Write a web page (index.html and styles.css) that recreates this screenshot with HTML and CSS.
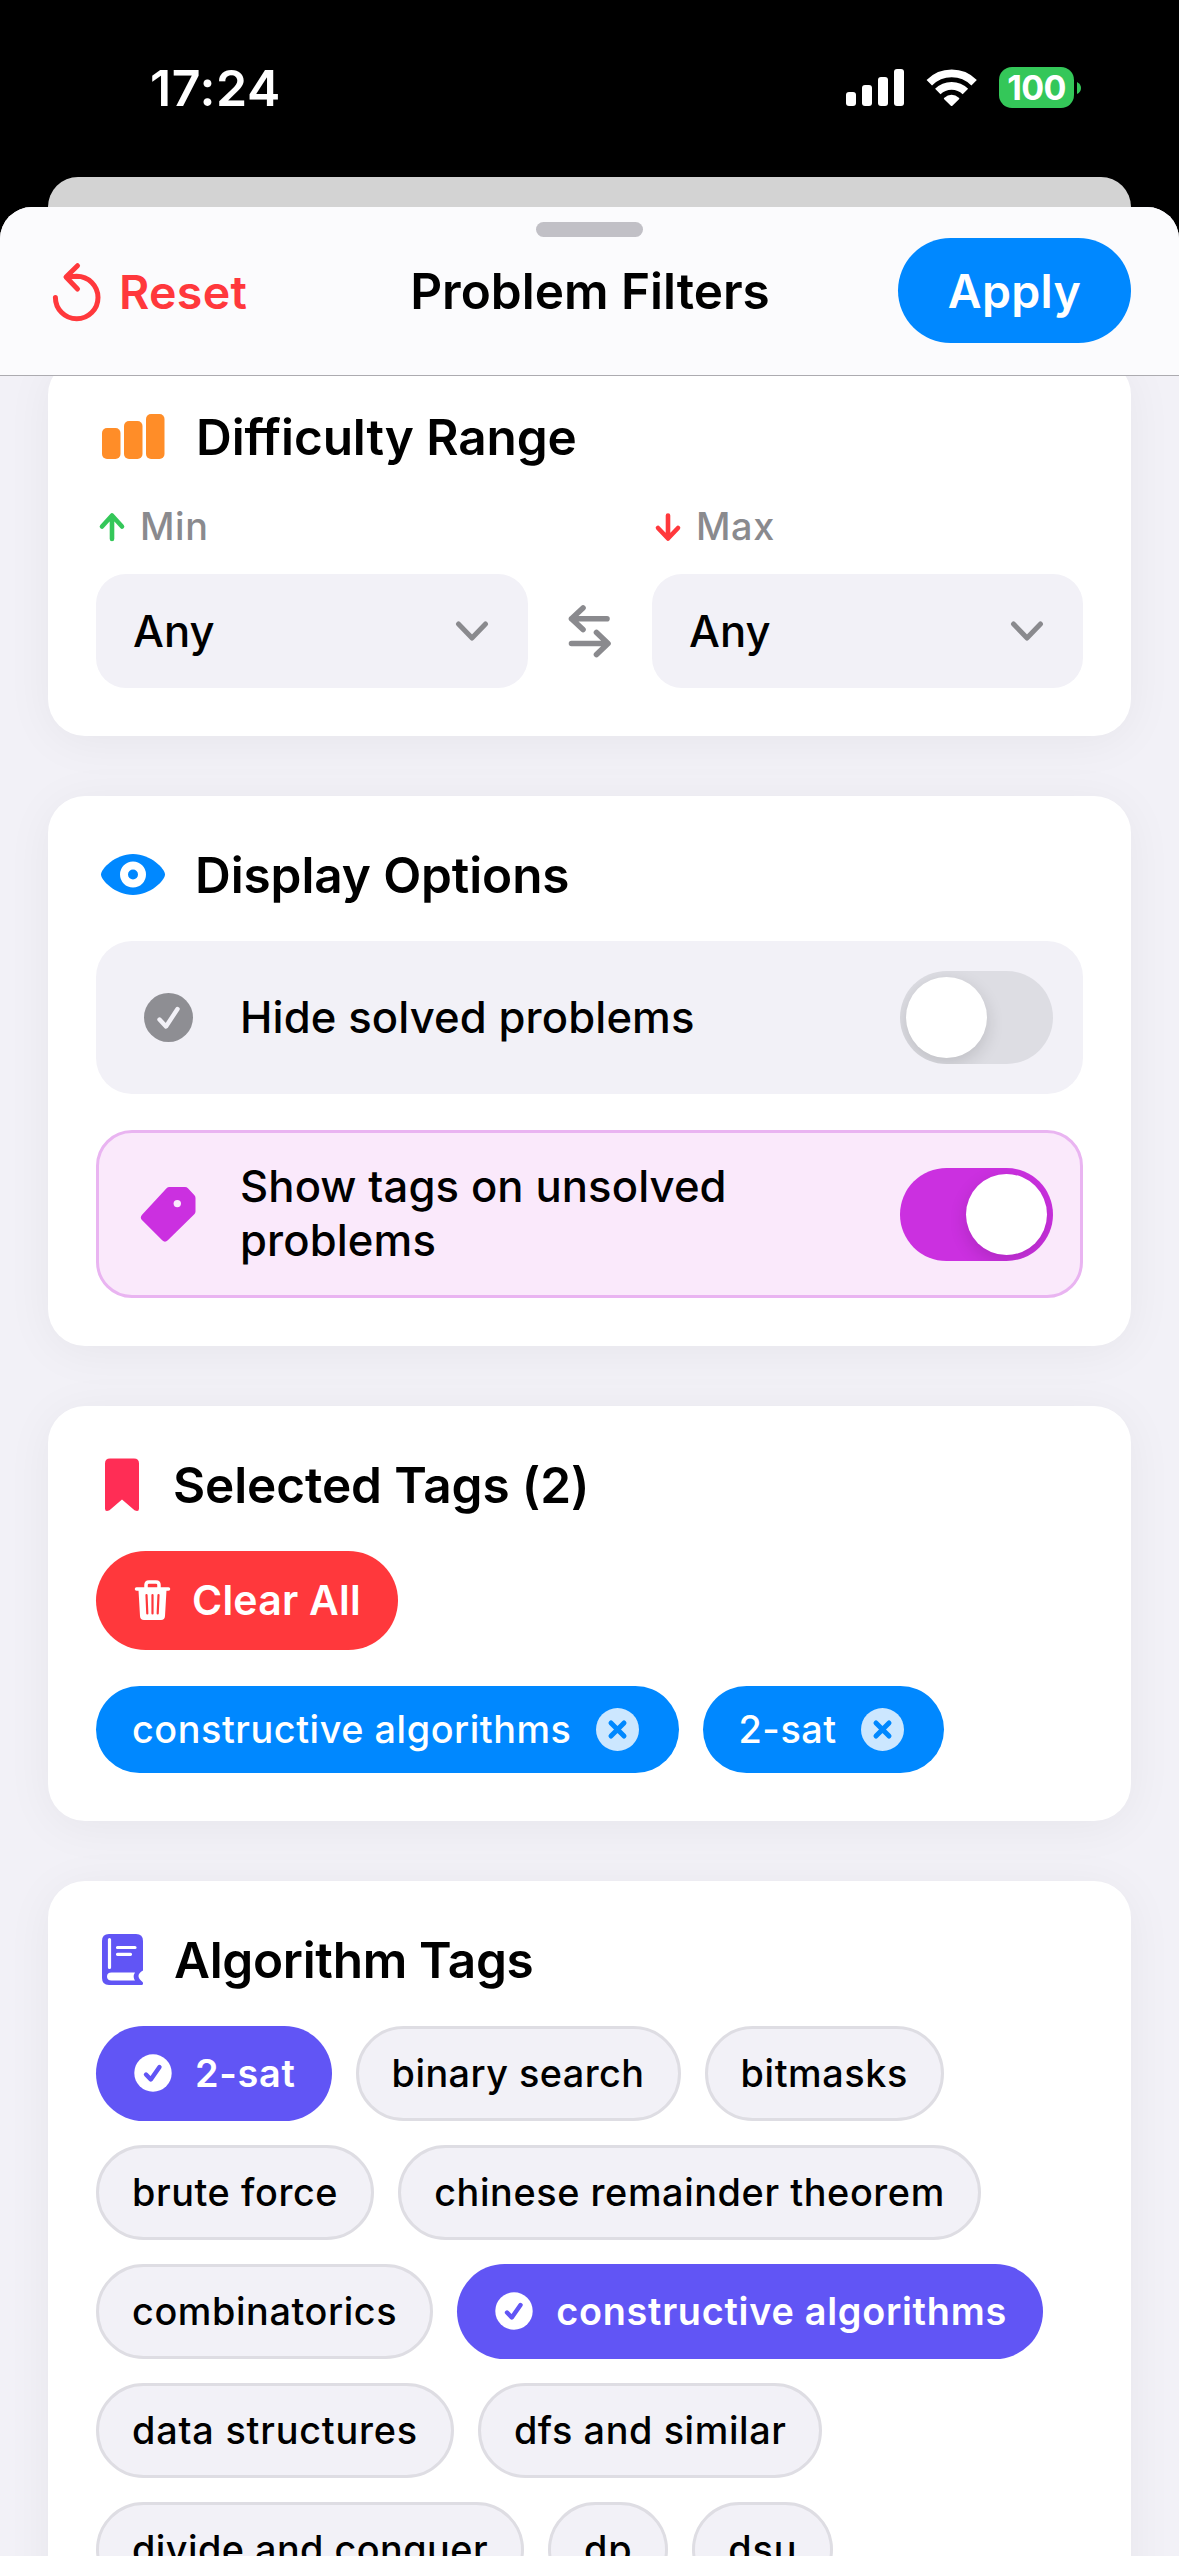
FILE: index.html
```html
<!DOCTYPE html>
<html lang="en">
<head>
<meta charset="utf-8">
<title>Problem Filters</title>
<link rel="stylesheet" href="styles.css">
</head>
<body>
<div class="status">
  <span class="time">17:24</span>
  <div class="status-icons">
    <svg class="signal" viewBox="846 67 58 41"><g fill="#fff"><rect x="846" y="92" width="10" height="14" rx="3"/><rect x="862" y="85" width="10" height="21" rx="3"/><rect x="878" y="77" width="10" height="29" rx="3"/><rect x="894" y="69" width="10" height="37" rx="3"/></g></svg>
    <svg class="wifi" viewBox="926 67 52 41"><g fill="none" stroke="#fff" stroke-width="7.7"><path d="M929.3 82.7a31.6 31.6 0 0 1 44.8 0"/><path d="M937.8 91.5a19.5 19.5 0 0 1 27.6 0"/></g><path d="M944 98q7.6-6.6 15.2 0q.4.6-.2 1.200l-6.400 6.200q-1 1-2 0l-6.400-6.200q-.6-.6-.2-1.200z" fill="#fff"/></svg>
    <div class="battery"><span class="level">100</span><svg class="nub" viewBox="0 0 4 12"><path d="M0 0q4 2 4 6t-4 6z" fill="#34c759"/></svg></div>
  </div>
</div>
<div class="back-sheet"></div>
<main class="sheet">
  <header class="bar">
    <span class="grabber"></span>
    <div class="reset">
      <svg class="reset-icon" viewBox="50 260 54 64"><path d="M55.400 297.500A21.300 21.300 0 1 0 76.700 276.200L67 277M77.500 265.700 66 277 77.500 289" fill="none" stroke="#ff383c" stroke-width="5" stroke-linecap="round" stroke-linejoin="round"/></svg>
      <span>Reset</span>
    </div>
    <h1>Problem Filters</h1>
    <div class="apply">Apply</div>
  </header>
  <div class="content">
    <section class="card">
      <h2><svg class="i-bars" viewBox="96 406 74 62"><g fill="#ff8d28"><rect x="102" y="428" width="18.500" height="31" rx="5"/><rect x="124" y="421" width="18.500" height="38" rx="5"/><rect x="146" y="414" width="18.500" height="45" rx="5"/></g></svg><span class="t-range">Difficulty Range</span></h2>
      <div class="range">
        <div class="field">
          <div class="label"><svg class="arrow" viewBox="96 503 32 46"><path d="M112 539V516M102 526.500l10-11 10 11" stroke="#34c759"/></svg>Min</div>
          <div class="select">Any<svg class="chev" viewBox="0 0 34 22"><path d="M3.500 4l13.500 14L30.500 4"/></svg></div>
        </div>
        <div class="swap"><svg viewBox="566 604 48 56"><path d="M571.500 619.700H607M583 609l-11.500 10.700 11.500 10.800M571.500 644.500H607M596.500 633.500L608 644.500l-11.500 11"/></svg></div>
        <div class="field">
          <div class="label"><svg class="arrow" viewBox="652 503 32 46"><path d="M668 515.500V538M658 528l10 10.500 10-10.500" stroke="#ff383c"/></svg>Max</div>
          <div class="select">Any<svg class="chev" viewBox="0 0 34 22"><path d="M3.500 4l13.500 14L30.500 4"/></svg></div>
        </div>
      </div>
    </section>

    <section class="card">
      <h2><svg class="i-eye" viewBox="96 844 73 62"><path d="M101 874.500C101 869 115 854 133 854S165 869 165 874.500 151 895 133 895 101 880 101 874.500Z" fill="#08f"/><circle cx="133" cy="874.500" r="9" fill="#08f" stroke="#fff" stroke-width="8"/></svg>Display Options</h2>
      <div class="options">
        <div class="option">
          <svg class="o-icon" viewBox="138 987 61 61"><circle cx="168.500" cy="1017.500" r="24.500" fill="#8e8e93"/><path d="M159.500 1019.500l6.500 7 11.500-17.500" class="tick" stroke="#f2f1f7"/></svg>
          <span class="o-text">Hide solved problems</span>
          <span class="toggle"><span class="knob"></span></span>
        </div>
        <div class="option active">
          <svg class="o-icon" viewBox="138 1184 61 61"><path d="M169.500 1191h15.500l6.500 7v13.500L165 1237.500 145 1217.500z" fill="#cb30e0" stroke="#cb30e0" stroke-width="8" stroke-linejoin="round"/><circle cx="177.300" cy="1203.600" r="3.700" fill="#fae9fb"/></svg>
          <span class="o-text">Show tags on unsolved problems</span>
          <span class="toggle on"><span class="knob"></span></span>
        </div>
      </div>
    </section>

    <section class="card">
      <h2><svg class="i-mark" viewBox="96 1454 51 62"><path d="M110 1458.500h24q5 0 5 5v45q0 4-4.500 1.800L122 1499.500l-12.500 10.800q-4.500 2.200-4.500-1.800v-45q0-5 5-5z" fill="#ff2d55"/></svg>Selected Tags (2)</h2>
      <div class="clear"><svg viewBox="132 1576 42 50"><path d="M146 1589v-3q0-3 3-3h7q3 0 3 3v3" fill="none" stroke="#fff" stroke-width="3.500"/><path d="M136.500 1590h32" stroke="#fff" stroke-width="3.500" stroke-linecap="round"/><path d="M138.500 1591h28l-1.500 26q-.2 4-4 4h-17q-3.800 0-4-4z" fill="#fff"/><path d="M146.500 1596l.8 18.500M152.500 1596v18.500M158.500 1596l-.8 18.500" stroke="#ff383c" stroke-width="2.200" stroke-linecap="round"/></svg>Clear All</div>
      <div class="selected">
        <div class="pill"><span>constructive algorithms</span><svg viewBox="0 0 43 43"><circle cx="21.500" cy="21.500" r="21.500" fill="#cce7ff"/><path d="M15 15l13 13M28 15L15 28"/></svg></div>
        <div class="pill"><span>2-sat</span><svg viewBox="0 0 43 43"><circle cx="21.500" cy="21.500" r="21.500" fill="#cce7ff"/><path d="M15 15l13 13M28 15L15 28"/></svg></div>
      </div>
    </section>

    <section class="card tags-card">
      <h2 class="h-algo"><svg class="i-book" viewBox="96 1929 53 62"><path d="M109 1934h27q7 0 7 7v29.500q-4.500 2.500-4.500 5.500t4.300 6.200q1 2.800-1.800 2.800h-32q-7 0-7-7v-37q0-7 7-7z" fill="#6155f5"/><path d="M109.500 1939.500v28M117.500 1947.500h17.500M117.500 1954.300h13" fill="none" stroke="#fff" stroke-width="3.200" stroke-linecap="round"/><path d="M111.500 1972.500h23.500q-2.600 4 0 8h-23.500q-4.500 0-4.500-4t4.500-4z" fill="#fff"/></svg>Algorithm Tags</h2>
      <div class="tags">
        <div class="chip on"><svg viewBox="0 0 38 38"><circle cx="19" cy="19" r="18.700" fill="#fff"/><path d="M12 20.500l4.800 5L25.500 13" class="tick" stroke="#6155f5"/></svg>2-sat</div>
        <div class="chip narrow">binary search</div>
        <div class="chip">bitmasks</div>
        <div class="chip">brute force</div>
        <div class="chip">chinese remainder theorem</div>
        <div class="chip">combinatorics</div>
        <div class="chip on"><svg viewBox="0 0 38 38"><circle cx="19" cy="19" r="18.700" fill="#fff"/><path d="M12 20.500l4.800 5L25.500 13" class="tick" stroke="#6155f5"/></svg>constructive algorithms</div>
        <div class="chip wide">data structures</div>
        <div class="chip">dfs and similar</div>
        <div class="chip narrow">divide and conquer</div>
        <div class="chip wide">dp</div>
        <div class="chip wide">dsu</div>
      </div>
    </section>
  </div>
</main>
</body>
</html>
```
FILE: styles.css
```css
* { box-sizing: border-box; }

body {
  margin: 0;
  width: 1179px;
  height: 2556px;
  overflow: hidden;
  display: flex;
  flex-direction: column;
  background: #000;
  color: #000;
  font-family: Inter, "Liberation Sans", sans-serif;
  font-size: 37.8px;
  font-weight: 500;
}

svg { display: block; flex: none; }
h1, h2 { margin: 0; font-size: 49.5px; font-weight: 600; white-space: nowrap; }

/* Status bar */
.status {
  height: 177px;
  padding: 67px 98px 0 150px;
  display: flex;
  justify-content: space-between;
  align-items: flex-start;
  color: #fff;
}
.time { font-size: 50px; font-weight: 600; line-height: 42px; letter-spacing: 0.6px; }
.status-icons { display: flex; height: 41px; }
.signal { width: 58px; height: 41px; }
.wifi { width: 52px; height: 41px; margin: 0 21px 0 22px; }
.battery { display: flex; align-items: center; gap: 3px; }
.level {
  width: 75px;
  height: 41px;
  border-radius: 13px;
  background: #34c759;
  font-size: 34px;
  font-weight: 700;
  line-height: 41px;
  letter-spacing: -0.6px;
  text-align: center;
}
.nub { width: 4px; height: 12px; }

/* Sheets */
.back-sheet {
  flex: none;
  height: 60px;
  margin: 0 48px -30px;
  border-radius: 30px 30px 0 0;
  background: #d3d3d3;
}
.sheet {
  position: relative;
  flex: 1;
  min-height: 0;
  display: flex;
  flex-direction: column;
  overflow: hidden;
  border-radius: 32px 32px 0 0;
  background: #f2f1f7;
}
.bar {
  position: relative;
  z-index: 1;
  flex: none;
  height: 169px;
  padding: 31px 48px 32px 50px;
  display: grid;
  grid-template-columns: 1fr auto 1fr;
  align-items: start;
  background: #fbfbfd;
  border-bottom: 1px solid #acabb0;
}
.bar h1 { line-height: 106px; margin-left: -1px; }
.grabber {
  position: absolute;
  top: 15px;
  left: 536px;
  width: 107px;
  height: 15px;
  border-radius: 8px;
  background: #c1c0c6;
}
.reset {
  display: flex;
  align-items: center;
  gap: 15px;
  height: 105px;
  padding-top: 3px;
  color: #ff383c;
  font-size: 46.5px;
  font-weight: 600;
  letter-spacing: 0.3px;
}
.reset-icon { width: 54px; height: 64px; }
.apply {
  justify-self: end;
  width: 233px;
  height: 105px;
  border-radius: 53px;
  background: #08f;
  color: #fff;
  font-size: 46.5px;
  font-weight: 600;
  line-height: 106px;
  letter-spacing: 0.3px;
  text-align: center;
}

/* Cards; the first one is scrolled partly under the bar */
.content {
  flex: none;
  display: flex;
  flex-direction: column;
  gap: 60px;
  margin-top: -18px;
  padding: 0 48px;
}
.card {
  padding: 48px;
  border-radius: 37px;
  background: #fff;
  box-shadow: 0 6px 48px rgba(0, 0, 20, 0.05);
}
.card h2 {
  display: flex;
  gap: 26px;
  height: 62px;
  margin-bottom: 35px;
  line-height: 62px;
  letter-spacing: -0.1px;
}
.card .h-algo { gap: 25px; letter-spacing: -0.3px; }
.card h2 svg { height: 62px; }
.i-bars { width: 74px; }
.i-eye { width: 73px; }
.i-mark { width: 51px; }
.i-book { width: 53px; }

/* Difficulty range */
.range { display: grid; grid-template-columns: 432px 124px 431px; align-items: end; }
.label {
  display: flex;
  gap: 12px;
  height: 46px;
  margin-bottom: 25px;
  line-height: 46px;
  letter-spacing: 0.6px;
  color: #8a8a8e;
}
.arrow { width: 32px; height: 46px; }
.arrow path { fill: none; stroke-width: 4.6; stroke-linecap: round; stroke-linejoin: round; }
.select {
  display: flex;
  align-items: center;
  justify-content: space-between;
  height: 114px;
  padding: 0 39px 0 37px;
  border-radius: 30px;
  background: #f2f1f7;
  font-size: 43.6px;
}
.chev { width: 34px; height: 22px; }
.chev path, .swap path {
  fill: none;
  stroke: #8a8a8e;
  stroke-width: 5;
  stroke-linecap: round;
  stroke-linejoin: round;
}
.swap { display: grid; place-items: center; height: 114px; }
.swap svg { width: 48px; height: 56px; }
.swap path { stroke-width: 5.6; }

/* Display options */
.options { display: flex; flex-direction: column; gap: 36px; }
.option {
  display: flex;
  align-items: center;
  min-height: 153px;
  padding: 0 30px 0 42px;
  border-radius: 36px;
  background: #f2f1f7;
  font-size: 43.6px;
  line-height: 54px;
  letter-spacing: 0.12px;
}
.option.active {
  min-height: 168px;
  padding: 0 27px 0 39px;
  border: 3px solid #e9b4f1;
  background: #fae9fb;
}
.o-icon { width: 61px; height: 61px; margin-right: 41px; }
.o-text { flex: 1; padding-right: 30px; }
.tick { fill: none; stroke-width: 4.4; stroke-linecap: round; stroke-linejoin: round; }
.toggle {
  display: flex;
  width: 153px;
  height: 93px;
  padding: 6px;
  border-radius: 47px;
  overflow: hidden;
  background: #dddde3;
}
.knob {
  width: 81px;
  height: 81px;
  border-radius: 50%;
  background: #fff;
  box-shadow: 0 6px 18px rgba(0, 0, 0, 0.14);
}
.toggle.on { justify-content: flex-end; background: #cb30e0; }

/* Selected tags */
.clear {
  display: flex;
  align-items: center;
  gap: 18px;
  width: 302px;
  height: 99px;
  padding: 0 0 1px 36px;
  border-radius: 50px;
  background: #ff383c;
  color: #fff;
  font-size: 41px;
  font-weight: 600;
  letter-spacing: 0.2px;
}
.clear svg { width: 42px; height: 50px; }
.clear path { stroke-linejoin: round; }
.selected { display: flex; gap: 24px; margin-top: 36px; }
.pill {
  display: flex;
  align-items: center;
  gap: 24px;
  height: 87px;
  padding: 0 40px 0 36px;
  border-radius: 44px;
  background: #08f;
  color: #fff;
  letter-spacing: 0.55px;
}
.pill span { padding-bottom: 1px; }
.pill svg { width: 43px; height: 43px; }
.pill path { stroke: #08f; stroke-width: 5; stroke-linecap: round; }

/* Algorithm tags */
.tags { display: flex; flex-wrap: wrap; gap: 24px; }
.chip {
  display: flex;
  align-items: center;
  height: 95px;
  padding: 0 33px 1px;
  border: 3px solid #dedde3;
  border-radius: 48px;
  background: #f2f1f7;
  letter-spacing: 0.6px;
  white-space: nowrap;
}
.chip.wide { letter-spacing: 0.8px; }
.chip.narrow { letter-spacing: 0.46px; }
.chip.on {
  gap: 23px;
  padding: 0 36px 1px 38px;
  border: 0;
  background: #6155f5;
  color: #fff;
  font-weight: 600;
  letter-spacing: 0.73px;
}
.chip.on svg { width: 38px; height: 38px; }
```
